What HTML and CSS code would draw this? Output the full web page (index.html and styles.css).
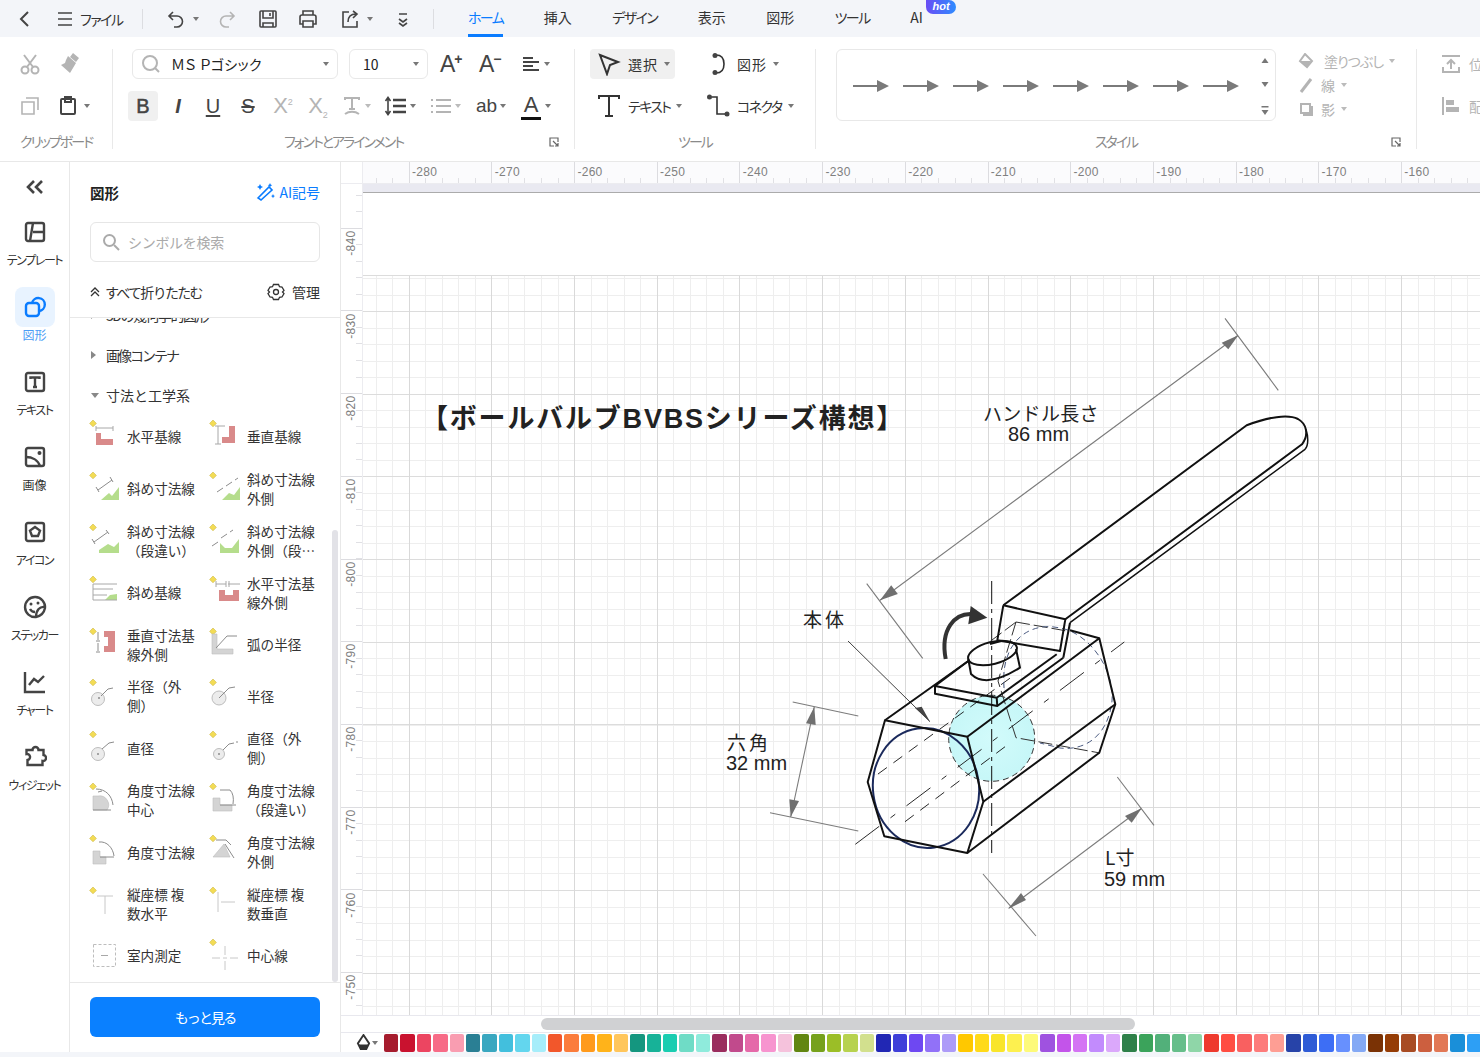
FILE: index.html
```html
<!DOCTYPE html>
<html lang="ja">
<head>
<meta charset="utf-8">
<title>図面エディタ</title>
<link rel="stylesheet" href="styles.css">
</head>
<body>
<svg class="defs" width="0" height="0" aria-hidden="true">
  <defs>
    <path id="dm" d="M5 1l3.400 3.400L5 7.800 1.600 4.400z" fill="#f3dc55" stroke="#cdb94a" stroke-width=".6"/>
    <radialGradient id="sphere" cx=".5" cy=".5" r=".6">
      <stop offset="0" stop-color="#d2fbfb"/>
      <stop offset="1" stop-color="#c4f6f7"/>
    </radialGradient>
  </defs>
</svg>
<div class="app">
  <header class="topbar">
    <svg class="ic18" viewBox="0 0 18 18"><path d="M12 2L5 9l7 7" class="ln"/></svg>
    <svg class="ic18 m22" viewBox="0 0 18 18"><path d="M2 3h14M2 9h14M2 15h14" class="ln thin"/></svg>
    <span class="file-label">ファイル</span>
    <i class="vsep m20"></i>
    <svg class="ic20 m23" viewBox="0 0 20 20"><path d="M7 3L3 7l4 4M3 7h8a5.500 5.500 0 0 1 0 11H8" class="ln thin"/></svg>
    <i class="caret m7"></i>
    <svg class="ic20 m18 off" viewBox="0 0 20 20"><path d="M13 3l4 4-4 4M17 7H9a5.500 5.500 0 0 0 0 11h3" class="ln thin"/></svg>
    <svg class="ic20 m21" viewBox="0 0 20 20"><path d="M3 2h14a1 1 0 0 1 1 1v14a1 1 0 0 1-1 1H3a1 1 0 0 1-1-1V3a1 1 0 0 1 1-1zM5 2v7h10V2M12 4v3M5 18v-4h10v4" class="ln thin"/></svg>
    <svg class="ic20 m20" viewBox="0 0 20 20"><path d="M5 6V2h10v4M5 15H2V8a2 2 0 0 1 2-2h12a2 2 0 0 1 2 2v7h-3M5 12h10v6H5z" class="ln thin"/></svg>
    <svg class="ic20 m22" viewBox="0 0 20 20"><path d="M9 3H3v15h14v-6M8 13c0-5 3-8 8-8M13 2l4 3-4 4" class="ln thin"/></svg>
    <i class="caret m7"></i>
    <svg class="ic16 m22" viewBox="0 0 16 16"><path d="M4 3h8M4 8l4 3 4-3M4 12l4 3 4-3" class="ln thin"/></svg>
    <i class="vsep m22"></i>
    <nav class="tabs">
      <a class="tab tab-on kana">ホーム</a>
      <a class="tab">挿入</a>
      <a class="tab kana">デザイン</a>
      <a class="tab">表示</a>
      <a class="tab">図形</a>
      <a class="tab kana">ツール</a>
      <a class="tab tab-ai">AI<b class="hot">hot</b></a>
    </nav>
  </header>

  <section class="ribbon">
    <div class="rg rg-clip">
      <div class="rrow pad-clip">
        <svg class="ic22 off" viewBox="0 0 22 22"><circle cx="6" cy="17" r="3.500" class="ln"/><circle cx="16" cy="17" r="3.500" class="ln"/><path d="M5 2l9 12M17 2L8 14" class="ln"/></svg>
        <svg class="ic22 off m17" viewBox="0 0 22 22"><path d="M15 0l6 5-3 4-6-5zM10 3l8 7-6 10-9-8 4-2 1-3z" fill="currentColor"/></svg>
      </div>
      <div class="rrow pad-clip">
        <svg class="ic22 off" viewBox="0 0 22 22"><path d="M3 7h12v12H3zM7 3h12v12" class="ln thin"/></svg>
        <svg class="ic22 m16" viewBox="0 0 22 22"><path d="M5 4h12a1 1 0 0 1 1 1v13a1 1 0 0 1-1 1H5a1 1 0 0 1-1-1V5a1 1 0 0 1 1-1zM8 2h6v5H8z" class="ln"/></svg>
        <i class="caret m5"></i>
      </div>
      <div class="rlabel">クリップボード</div>
    </div>

    <div class="rg rg-font">
      <div class="rrow pad-font">
        <div class="field font-field">
          <svg class="ic20 off" viewBox="0 0 20 20"><circle cx="9" cy="9" r="7" class="ln"/><path d="M14 14l4 4" class="ln"/></svg>
          <span class="field-text">ＭＳ Ｐゴシック</span>
          <i class="caret"></i>
        </div>
        <div class="field size-field">
          <span class="field-text">10</span>
          <i class="caret"></i>
        </div>
        <span class="a-grow m12">A<sup>+</sup></span>
        <span class="a-grow m15">A<sup>−</sup></span>
        <svg class="ic18 m19" viewBox="0 0 18 18"><path d="M1 3h10M1 7h16M1 11h10M1 15h16" class="ln"/></svg>
        <i class="caret m4"></i>
      </div>
      <div class="rrow pad-font2">
        <span class="fb fb-on">B</span>
        <span class="fb fi">I</span>
        <span class="fb fu">U</span>
        <span class="fb fs">S</span>
        <span class="fb fx">X<sup>2</sup></span>
        <span class="fb fx fx-last">X<sub>2</sub></span>
        <svg class="ic20 m9 off" viewBox="0 0 20 20"><path d="M3 4V2h14v2M10 2v11M7 13h6M3 18c4-3 10-3 14 0" class="ln"/></svg>
        <i class="caret m3 off-caret"></i>
        <svg class="ic22 m13" viewBox="0 0 22 22"><path d="M9 5h13M9 11h13M9 17h13" class="ln thick"/><path d="M4 3v16M1.500 6L4 2.500 6.500 6M1.500 16L4 19.500 6.500 16" class="ln thin"/></svg>
        <i class="caret m4"></i>
        <svg class="ic22 m14 off" viewBox="0 0 22 22"><path d="M6 5h15M6 11h15M6 17h15M1 5h2M1 11h2M1 17h2" class="ln"/></svg>
        <i class="caret m3 off-caret"></i>
        <span class="ab m15">ab</span>
        <i class="caret m4"></i>
        <span class="color-a m15">A</span>
        <i class="caret m4"></i>
      </div>
      <div class="rlabel">フォントとアラインメント</div>
      <svg class="launch" viewBox="0 0 10 10"><path d="M9 5V1H1v8h4M4 4l5 5M9 6v3H6" class="launch-ln"/></svg>
    </div>

    <div class="rg rg-tool">
      <div class="rrow pad-tool">
        <div class="tool tool-on">
          <svg class="ic24" viewBox="0 0 24 24"><path d="M3 3l18 7-8 3-3 9z" class="ln"/></svg>
          <span class="kanji">選択</span><i class="caret m6"></i>
        </div>
        <div class="tool">
          <svg class="ic24" viewBox="0 0 24 24"><path d="M10 3c6 0 8 4 8 9s-2 9-8 9" class="ln thin"/><circle cx="9" cy="3.500" r="2.500" fill="#444"/><circle cx="9" cy="20.500" r="2.500" fill="#444"/></svg>
          <span class="kanji">図形</span><i class="caret m6"></i>
        </div>
      </div>
      <div class="rrow pad-tool">
        <div class="tool tool-wide">
          <svg class="ic24" viewBox="0 0 24 24"><path d="M2 5V2h20v3M12 2v19M8 22h8" class="ln"/></svg>
          <span class="kana">テキスト</span><i class="caret m6"></i>
        </div>
        <div class="tool">
          <svg class="ic24" viewBox="0 0 24 24"><path d="M6 3h5v17h8" class="ln thin"/><circle cx="3.500" cy="3" r="2.500" fill="#444"/><circle cx="21" cy="20" r="2.500" fill="#444"/></svg>
          <span class="kana">コネクタ</span><i class="caret m6"></i>
        </div>
      </div>
      <div class="rlabel">ツール</div>
    </div>

    <div class="rg rg-style">
      <div class="style-row">
        <div class="style-box">
          <svg class="arrow" viewBox="0 0 36 12"><path d="M0 5h24v-5l12 6-12 6V7H0z"/></svg>
          <svg class="arrow" viewBox="0 0 36 12"><path d="M0 5h24v-5l12 6-12 6V7H0z"/></svg>
          <svg class="arrow" viewBox="0 0 36 12"><path d="M0 5h24v-5l12 6-12 6V7H0z"/></svg>
          <svg class="arrow" viewBox="0 0 36 12"><path d="M0 5h24v-5l12 6-12 6V7H0z"/></svg>
          <svg class="arrow" viewBox="0 0 36 12"><path d="M0 5h24v-5l12 6-12 6V7H0z"/></svg>
          <svg class="arrow" viewBox="0 0 36 12"><path d="M0 5h24v-5l12 6-12 6V7H0z"/></svg>
          <svg class="arrow" viewBox="0 0 36 12"><path d="M0 5h24v-5l12 6-12 6V7H0z"/></svg>
          <svg class="arrow" viewBox="0 0 36 12"><path d="M0 5h24v-5l12 6-12 6V7H0z"/></svg>
          <div class="style-scroll">
            <svg viewBox="0 0 8 5"><path d="M4 0l3.500 5h-7z"/></svg>
            <svg viewBox="0 0 8 5"><path d="M4 5L.5 0h7z"/></svg>
            <svg class="tall" viewBox="0 0 8 9"><path d="M.5 0h7v1.500h-7zM4 9L.5 4h7z"/></svg>
          </div>
        </div>
        <div class="style-opts">
          <div class="opt"><svg class="ic16" viewBox="0 0 16 16"><path d="M7 1l7 7-5 6-7-6z" fill="none" stroke="currentColor" stroke-width="2"/><path d="M2 8h11l-4 6z" fill="currentColor"/></svg><span class="opt-long">塗りつぶし</span><i class="caret off-caret"></i></div>
          <div class="opt"><svg class="ic16" viewBox="0 0 16 16"><path d="M3 15L13 2" stroke="currentColor" stroke-width="3" fill="none"/></svg><span>線</span><i class="caret off-caret"></i></div>
          <div class="opt"><svg class="ic16" viewBox="0 0 16 16"><path d="M3 3h9v9H3z" fill="none" stroke="currentColor" stroke-width="2"/><path d="M5 14h9V5" fill="none" stroke="currentColor" stroke-width="2"/></svg><span>影</span><i class="caret off-caret"></i></div>
        </div>
      </div>
      <div class="rlabel">スタイル</div>
      <svg class="launch" viewBox="0 0 10 10"><path d="M9 5V1H1v8h4M4 4l5 5M9 6v3H6" class="launch-ln"/></svg>
    </div>

    <div class="rg-last">
      <div class="rrow last-row">
        <svg class="ic20 off" viewBox="0 0 20 20"><path d="M1 2h18M10 15V6M6 10l4-4 4 4M2 13v5h16v-5" class="ln"/></svg>
        <span>位</span>
      </div>
      <div class="rrow last-row">
        <svg class="ic20 off" viewBox="0 0 20 20"><path d="M2 1v18" class="ln"/><path d="M5 4h8v5H5zM5 11h13v5H5z" fill="currentColor"/></svg>
        <span>配</span>
      </div>
    </div>
  </section>

  <main class="main">
    <aside class="sidenav">
      <svg class="collapse" viewBox="0 0 18 14"><path d="M8 1L2 7l6 6M16 1l-6 6 6 6" class="ln thick"/></svg>
      <a class="nav-item">
        <span class="nav-ic"><svg class="ic24" viewBox="0 0 24 24"><rect x="3" y="3" width="18" height="18" rx="2" class="ln"/><path d="M10 3L7 21M10 12h11" class="ln"/></svg></span>
        <span class="nav-label">テンプレート</span>
      </a>
      <a class="nav-item nav-on">
        <span class="nav-ic"><svg class="ic24" viewBox="0 0 24 24"><rect x="3" y="8" width="13" height="13" rx="3" class="ln"/><path d="M9 8a6.500 6.500 0 1 1 7 8" class="ln"/></svg></span>
        <span class="nav-label nav-kanji">図形</span>
      </a>
      <a class="nav-item">
        <span class="nav-ic"><svg class="ic24" viewBox="0 0 24 24"><rect x="3" y="3" width="18" height="18" rx="2" class="ln"/><path d="M7.500 9V7.500h9V9M12 7.500V17M10 17h4" class="ln"/></svg></span>
        <span class="nav-label">テキスト</span>
      </a>
      <a class="nav-item">
        <span class="nav-ic"><svg class="ic24" viewBox="0 0 24 24"><rect x="3" y="3" width="18" height="18" rx="2" class="ln"/><path d="M3 12c6 0 12 3 14 9" class="ln"/><circle cx="16.500" cy="8" r="2" fill="#444"/></svg></span>
        <span class="nav-label nav-kanji">画像</span>
      </a>
      <a class="nav-item">
        <span class="nav-ic"><svg class="ic24" viewBox="0 0 24 24"><rect x="3" y="3" width="18" height="18" rx="2" class="ln"/><path d="M12 7l5 3.600-2 5.400H9l-2-5.400z" class="ln"/></svg></span>
        <span class="nav-label">アイコン</span>
      </a>
      <a class="nav-item">
        <span class="nav-ic"><svg class="ic24" viewBox="0 0 24 24"><path d="M22 13a10 10 0 1 0-9 9c5-1 8-4 9-9z" class="ln"/><path d="M22 12c-5-1-9 3-9 10M7 14c1 2 3 3 5 3" class="ln thin"/><circle cx="8" cy="9" r="1.500" fill="#444"/><circle cx="15" cy="8" r="1.500" fill="#444"/></svg></span>
        <span class="nav-label">ステッカー</span>
      </a>
      <a class="nav-item">
        <span class="nav-ic"><svg class="ic24" viewBox="0 0 24 24"><path d="M2 2v20h20M6 15l5-6 4 3 6-6" class="ln"/></svg></span>
        <span class="nav-label">チャート</span>
      </a>
      <a class="nav-item">
        <span class="nav-ic"><svg class="ic24" viewBox="0 0 24 24"><path d="M10 6a3 3 0 1 1 6 0h5v5a3 3 0 1 1-1 6v4H5v-5a3 3 0 1 0-1-6V6z" class="ln" transform="translate(-.5 -1)"/></svg></span>
        <span class="nav-label">ウィジェット</span>
      </a>
    </aside>

    <aside class="panel">
      <div class="panel-head">
        <div class="panel-title">
          <strong>図形</strong>
          <a class="ai-link">
            <svg class="ic20" viewBox="0 0 20 20"><path d="M3 18L14 7l3 3L6 20z" class="ln thin" transform="translate(0 -2)"/><path d="M5 2l1 2 2 1-2 1-1 2-1-2-2-1 2-1zM15 1l.7 1.500 1.500.7-1.500.7L15 5.500l-.7-1.600-1.500-.7 1.500-.7zM18 12l.7 1.500 1.300.6-1.300.7-.7 1.400-.7-1.400-1.300-.7 1.300-.6z" fill="currentColor"/></svg>
            AI記号
          </a>
        </div>
        <div class="search">
          <svg class="ic18" viewBox="0 0 18 18"><circle cx="7.500" cy="7.500" r="5.500" class="ln"/><path d="M12 12l5 5" class="ln"/></svg>
          <span>シンボルを検索</span>
        </div>
        <div class="panel-tools">
          <span class="fold"><svg class="ic10" viewBox="0 0 10 10"><path d="M1 5l4-4 4 4M1 9l4-4 4 4" class="ln thin1"/></svg><span class="fold-text">すべて折りたたむ</span></span>
          <span class="manage"><svg class="ic18" viewBox="0 0 18 18"><path d="M6.500 1.500h5l1 2.200 2.500.3 2 3.500-1.500 1.500 1.500 1.500-2 3.500-2.500.3-1 2.200h-5l-1-2.200-2.500-.3-2-3.500L2.500 9 1 7.500l2-3.500 2.500-.3z" class="ln thin1"/><circle cx="9" cy="9" r="2.500" class="ln thin1"/></svg>管理</span>
        </div>
      </div>
      <div class="list">
        <div class="sect sect-clip"><i class="tri-r"></i>3Dの幾何学的図形</div>
        <div class="sect"><i class="tri-r"></i><span class="sect-kana">画像コンテナ</span></div>
        <div class="sect"><i class="tri-d"></i>寸法と工学系</div>
        <div class="shapes">
          <div class="shape"><svg class="si" viewBox="0 0 36 36"><use href="#dm"/><path d="M8 14h5v6h12v6H8z" class="red"/><path d="M8 7v5M25 7v5M8 9h17" class="gl"/></svg><span class="sl">水平基線</span></div>
          <div class="shape"><svg class="si" viewBox="0 0 36 36"><use href="#dm"/><path d="M21 7h6v17H14v-6h7z" class="red"/><path d="M10 7v18M7 7h10M7 25h6" class="gl"/></svg><span class="sl">垂直基線</span></div>
          <div class="shape"><svg class="si" viewBox="0 0 36 36"><use href="#dm"/><path d="M13 29l8-7 3 3 7-9v13z" class="grn"/><path d="M10 19l14-10M8 16l3 5M22 6l3 5" class="gl dk"/></svg><span class="sl">斜め寸法線</span></div>
          <div class="shape"><svg class="si" viewBox="0 0 36 36"><use href="#dm"/><path d="M14 29l7-7 5 2 6-8v13z" class="grn"/><path d="M9 21l6-4M18 15l6-4M27 9l3-2" class="gl dk"/></svg><span class="sl">斜め寸法線外側</span></div>
          <div class="shape"><svg class="si" viewBox="0 0 36 36"><use href="#dm"/><path d="M11 30v-3l9-6 6 3 5-5v11z" class="grn"/><path d="M6 19l14-10M4 16l3 5M18 7l3 4" class="gl dk"/></svg><span class="sl">斜め寸法線（段違い）</span></div>
          <div class="shape"><svg class="si" viewBox="0 0 36 36"><use href="#dm"/><path d="M12 30v-10l5 5 7 0 7-9v14z" class="grn"/><path d="M4 23l6-4M13 15l6-4M22 9l3-2" class="gl dk"/></svg><span class="sl clamp">斜め寸法線外側（段違い）</span></div>
          <div class="shape"><svg class="si" viewBox="0 0 36 36"><use href="#dm"/><path d="M17 25l5-5 7-1v6z" class="grn"/><path d="M5 9h24M5 9v16h24M5 14h20M5 20h14" class="gl"/></svg><span class="sl">斜め基線</span></div>
          <div class="shape"><svg class="si" viewBox="0 0 36 36"><use href="#dm"/><path d="M11 15h6v5h8v-5h6v11H11z" class="red"/><path d="M8 9h10M20 9h12M8 6v6M18 6v6M21 6v6" class="gl"/></svg><span class="sl">水平寸法基線外側</span></div>
          <div class="shape"><svg class="si" viewBox="0 0 36 36"><use href="#dm"/><path d="M16 4h11v21H16v-6h4v-9h-4z" class="red"/><path d="M10 5v8M10 16v8M8 14h4M8 25h4" class="gl dk"/></svg><span class="sl">垂直寸法基線外側</span></div>
          <div class="shape"><svg class="si" viewBox="0 0 36 36"><use href="#dm"/><path d="M4 7h5v15h16v5H4z" class="gry"/><path d="M8 21L19 9h10" class="gl dk"/></svg><span class="sl">弧の半径</span></div>
          <div class="shape"><svg class="si" viewBox="0 0 36 36"><use href="#dm"/><circle cx="10" cy="21" r="6.500" class="cir"/><path d="M10 20h2M11 19v2M13 18l7-7 5-1" class="gl dk"/></svg><span class="sl">半径（外側）</span></div>
          <div class="shape"><svg class="si" viewBox="0 0 36 36"><use href="#dm"/><circle cx="11" cy="20" r="7" class="cir"/><path d="M11 20l10-10 6-1" class="gl dk"/></svg><span class="sl">半径</span></div>
          <div class="shape"><svg class="si" viewBox="0 0 36 36"><use href="#dm"/><circle cx="10" cy="24" r="6.500" class="cir"/><path d="M9 24h2M10 23v2M14 19l7-6 5-1" class="gl dk"/></svg><span class="sl">直径</span></div>
          <div class="shape"><svg class="si" viewBox="0 0 36 36"><use href="#dm"/><circle cx="11" cy="24" r="5.500" class="cir"/><path d="M10 24h2M11 23v2M15 20l6-6 5-1M28 12h2" class="gl dk"/></svg><span class="sl">直径（外側）</span></div>
          <div class="shape"><svg class="si" viewBox="0 0 36 36"><use href="#dm"/><path d="M5 14h5a9 9 0 0 1 9 14H5z" class="gry"/><path d="M8 7c10 0 16 7 17 16M5 28h18M10 10l4-1" class="gl dk"/></svg><span class="sl">角度寸法線中心</span></div>
          <div class="shape"><svg class="si" viewBox="0 0 36 36"><use href="#dm"/><path d="M5 16h7v7h12v6H5z" class="gry"/><path d="M12 8h10c3 3 4 8 3 14M12 23h16" class="gl dk"/></svg><span class="sl">角度寸法線（段違い）</span></div>
          <div class="shape"><svg class="si" viewBox="0 0 36 36"><use href="#dm"/><path d="M5 17h7v6h6v7H5z" class="gry"/><path d="M11 8c8-1 14 6 15 14M12 23h14" class="gl dk"/></svg><span class="sl">角度寸法線</span></div>
          <div class="shape"><svg class="si" viewBox="0 0 36 36"><use href="#dm"/><path d="M5 23l11-13 6 13z" class="gry"/><path d="M8 6h10l5 5M17 10l9 14" class="gl dk"/></svg><span class="sl">角度寸法線外側</span></div>
          <div class="shape"><svg class="si" viewBox="0 0 36 36"><use href="#dm"/><path d="M9 10h16M17 10v18" class="gl lt"/></svg><span class="sl">縦座標 複<br>数水平</span></div>
          <div class="shape"><svg class="si" viewBox="0 0 36 36"><use href="#dm"/><path d="M10 6v20M13 16h14" class="gl lt"/></svg><span class="sl">縦座標 複<br>数垂直</span></div>
          <div class="shape"><svg class="si" viewBox="0 0 36 36"><path d="M5.500 6.500h22v22h-22z" class="dash"/><path d="M13 17.500h7" class="gl"/></svg><span class="sl">室内測定</span></div>
          <div class="shape"><svg class="si" viewBox="0 0 36 36"><use href="#dm"/><path d="M4 20h8M15 20h4M22 20h8M17 8v9M17 23v9" class="gl lt"/></svg><span class="sl">中心線</span></div>
        </div>
        <i class="list-thumb"></i>
      </div>
      <div class="panel-foot"><button class="more">もっと見る</button></div>
    </aside>

    <section class="work">
      <div class="ruler-corner"></div>
      <div class="ruler-top">
        <span>-280</span><span>-270</span><span>-260</span><span>-250</span><span>-240</span><span>-230</span><span>-220</span><span>-210</span><span>-200</span><span>-190</span><span>-180</span><span>-170</span><span>-160</span>
      </div>
      <div class="ruler-left">
        <span>-840</span><span>-830</span><span>-820</span><span>-810</span><span>-800</span><span>-790</span><span>-780</span><span>-770</span><span>-760</span><span>-750</span>
      </div>
      <div class="canvas">
        <div class="page-band"></div>
        <div class="page-head"></div>
        <div class="page-grid"></div>
        <svg class="diagram" viewBox="363 183 1117 831">
          <circle cx="991.700" cy="737.300" r="43" fill="url(#sphere)" class="d-sphere"/>

          <g class="d-dim">
            <path d="M1225 317.300L1278.300 389.300M866.700 582.700L922.700 657.300M880 599.300L1238.300 334.300"/>
            <path d="M792.700 701L858.300 715M770 811.700L858.300 830M814.300 705.700L790.700 816"/>
            <path d="M1117.300 776L1154 824.300M983 873L1036 935M1141.700 807.300L1009 907"/>
          </g>
          <g class="d-head">
            <path d="M1238.300 334.300L1221.700 341.700 1228.300 348.300z"/>
            <path d="M880 599.300L897.800 593 891.200 584.200z"/>
            <path d="M814.300 705.700L806 722.300 815.700 724z"/>
            <path d="M790.700 816L789.300 798.300 799 800z"/>
            <path d="M1141.700 807.300L1125 815 1131.700 821.700z"/>
            <path d="M1008 908L1021 892 1026 899z"/>
          </g>
          <path class="d-thin" d="M848 640L930 720.700"/>
          <path class="d-headk" d="M930 720.700L915 707 921.700 705.700z"/>

          <path class="d-center" d="M855.300 843.300L1124.300 641"/>
          <path class="d-vert" d="M991.700 580V852"/>
          <path class="d-bore" d="M878 773L1013 675M905 820.700L1010 742"/>
          <path class="d-hidden" d="M1016 621L998 680 1016 736.700 1100 752M1016 621L1067 630M1016 621L988 642"/>
          <path class="d-navy" d="M1004 687C1000 640 1030 620 1060 627C1090 632 1115 670 1112 700C1108 735 1085 750 1060 747L1040 742"/>

          <ellipse class="d-ring" cx="926" cy="787" rx="53" ry="60" transform="rotate(-8 926 787)"/>

          <g class="d-body">
            <path d="M885 719.300L967.300 735.700L983.300 800.700L967.300 852L884.300 835.300L867.700 781Z"/>
            <path d="M885 719.300L968.300 660M990 643L1001 640"/>
            <path d="M967.300 735.700L1099.300 637.300L1115.300 703.300L1099.300 751.700L967.300 852"/>
            <path d="M983.300 800.700L1115.300 703.300M1070 629.300L1099.300 637.300"/>
          </g>
          <g class="d-body">
            <path d="M935 685L996.700 696.700L1056.700 653.300M935 685L935 692.700L997.300 705L1063.300 656.700M996.700 696.700L997.300 705M935 685L968.300 660"/>
            <path d="M1003.300 604.300L997.300 639.300L1060 650L1065.300 618.300L1003.300 604.300M1063.300 656.700L1070 621.700"/>
            <path d="M1003.300 604.300L1246.700 424.300C1268 416 1288 413 1298 418C1307 423 1309 434 1302 443.300L1065.300 618.300"/>
            <path class="d-body-fine" d="M1070 621.700L1305 448.300C1309 444 1308 434 1306 429"/>
            <ellipse cx="992.500" cy="652" rx="25" ry="11" transform="rotate(-14 992.500 652)"/>
            <path d="M968.300 658L971 673Q986 688 1020 666.700L1016 648"/>
          </g>

          <path class="d-turn" d="M945.700 658C940 628 955 612 972 613"/>
          <path class="d-turnh" d="M970.700 605L987.300 616.700 968.300 623.300z"/>

          <text class="d-title" x="421" y="427">【ボールバルブBVBSシリーズ構想】</text>
          <text class="d-t" x="983" y="420">ハンドル長さ</text>
          <text class="d-n" x="1008" y="440">86 mm</text>
          <text class="d-t wide" x="803" y="626">本体</text>
          <text class="d-t wide" x="727" y="749">六角</text>
          <text class="d-n" x="726" y="769">32 mm</text>
          <text class="d-t" x="1105" y="864">L寸</text>
          <text class="d-n" x="1104" y="885">59 mm</text>
        </svg>
      </div>
      <div class="hscroll"><i class="hthumb"></i></div>
      <div class="palette">
        <svg class="fill-ic" viewBox="0 0 16 18"><path d="M8 1l6 9-3 6H5l-3-6z" fill="none" stroke="#333" stroke-width="2"/><path d="M3 11h10l-2 5H5z" fill="#333"/></svg>
        <i class="caret pal-caret"></i>
        <div class="swatches">
          <i style="background:#a61c2e"></i><i style="background:#c9122f"></i><i style="background:#ec4561"></i><i style="background:#f76b87"></i><i style="background:#f99db1"></i>
          <i style="background:#2a7f94"></i><i style="background:#39a7c0"></i><i style="background:#42bfdd"></i><i style="background:#63d6ee"></i><i style="background:#a6edfa"></i>
          <i style="background:#f2572b"></i><i style="background:#fb7c3c"></i><i style="background:#ff9a1c"></i><i style="background:#ffb31a"></i><i style="background:#ffc65c"></i>
          <i style="background:#14967f"></i><i style="background:#17b298"></i><i style="background:#1acdb1"></i><i style="background:#6fdcc6"></i><i style="background:#8febdc"></i>
          <i style="background:#9a2c5e"></i><i style="background:#c14a8c"></i><i style="background:#e569a9"></i><i style="background:#f794cf"></i><i style="background:#f5c2dc"></i>
          <i style="background:#618611"></i><i style="background:#76a11c"></i><i style="background:#9bbe27"></i><i style="background:#b7d24f"></i><i style="background:#d2e08e"></i>
          <i style="background:#2127b4"></i><i style="background:#3f3fd9"></i><i style="background:#6e48f2"></i><i style="background:#9171f8"></i><i style="background:#ad9bf8"></i>
          <i style="background:#ffc800"></i><i style="background:#ffda1a"></i><i style="background:#f9e52b"></i><i style="background:#fdf04f"></i><i style="background:#fdfa7a"></i>
          <i style="background:#9f52e0"></i><i style="background:#c354ea"></i><i style="background:#d474f4"></i><i style="background:#c28bfd"></i><i style="background:#dba8fb"></i>
          <i style="background:#2e8049"></i><i style="background:#3ba35b"></i><i style="background:#52b07a"></i><i style="background:#66be8a"></i><i style="background:#8fd6a8"></i>
          <i style="background:#ee3a2e"></i><i style="background:#ff4d42"></i><i style="background:#f96060"></i><i style="background:#fd7b7b"></i><i style="background:#fe9e94"></i>
          <i style="background:#2743a8"></i><i style="background:#2e5bd6"></i><i style="background:#3d6ef5"></i><i style="background:#6790fe"></i><i style="background:#84a9f5"></i>
          <i style="background:#7a3205"></i><i style="background:#953c05"></i><i style="background:#a84b23"></i><i style="background:#cc5f3f"></i><i style="background:#e27856"></i>
          <i style="background:#1a8fd9"></i><i style="background:#2d9ff5"></i>
        </div>
      </div>
    </section>
  </main>
  <div class="statusbar"></div>
</div>
</body>
</html>
```
FILE: styles.css
```css
* { box-sizing: border-box; }
html, body { margin: 0; height: 100%; }
body {
  overflow: hidden;
  background: #fff;
  color: #333;
  font-family: "Noto Sans CJK JP", "Noto Sans", sans-serif;
  font-size: 14px;
  font-feature-settings: "palt";
}
i { display: block; font-style: normal; }
a { display: block; }
sup, sub { line-height: 0; }
.defs { position: absolute; }
.app { display: flex; flex-direction: column; height: 1057px; }

/* generic icons */
svg { display: block; flex: none; }
.ic10 { width: 10px; height: 10px; }
.ic16 { width: 16px; height: 16px; }
.ic18 { width: 18px; height: 18px; }
.ic20 { width: 20px; height: 20px; }
.ic22 { width: 22px; height: 22px; }
.ic24 { width: 24px; height: 24px; }
.ln { fill: none; stroke: currentColor; stroke-width: 2; }
.ln.thin { stroke-width: 1.6; }
.ln.thin1 { stroke-width: 1.300; }
.ln.thick { stroke-width: 2.600; }
.off { color: #b4b4b4; }
.caret { width: 0; height: 0; flex: none; border-left: 3px solid transparent; border-right: 3px solid transparent; border-top: 4px solid #777; }
.off-caret { border-top-color: #bbb; }
.kana { letter-spacing: -1.6px; }
.kanji { letter-spacing: 1px; }
.m3 { margin-left: 3px; } .m4 { margin-left: 4px; } .m5 { margin-left: 5px; } .m6 { margin-left: 6px; }
.m7 { margin-left: 7px; } .m9 { margin-left: 9px; } .m12 { margin-left: 12px; } .m13 { margin-left: 13px; }
.m14 { margin-left: 14px; } .m15 { margin-left: 15px; } .m16 { margin-left: 16px; } .m17 { margin-left: 17px; }
.m18 { margin-left: 18px; } .m19 { margin-left: 19px; } .m20 { margin-left: 20px; } .m21 { margin-left: 21px; }
.m22 { margin-left: 22px; } .m23 { margin-left: 23px; }

/* top bar */
.topbar { height: 37px; flex: none; display: flex; align-items: center; padding-left: 16px; background: #f3f5f9; color: #444; }
.file-label { margin-left: 6px; width: 42px; white-space: nowrap; color: #333; letter-spacing: -1.500px; }
.vsep { width: 1px; height: 20px; background: #dcdde1; }
.tabs { display: flex; gap: 40.500px; margin-left: 34px; height: 37px; }
.tab { position: relative; height: 37px; line-height: 34px; color: #333; white-space: nowrap; }
.tab-on { color: #0a7cff; border-bottom: 3px solid #0a7cff; }
.hot { position: absolute; left: 16px; top: 0; width: 30px; height: 14px; border-radius: 0 8px 8px 8px; background: linear-gradient(90deg, #6a4df5, #2e8cff); color: #fff; font: italic 700 11px/13px "Liberation Sans", sans-serif; letter-spacing: 0; text-align: center; }

/* ribbon */
.ribbon { height: 125px; flex: none; display: flex; background: #fff; border-bottom: 1px solid #e8e8e8; color: #444; }
.rg { position: relative; height: 100px; margin-top: 12px; border-right: 1px solid #e9e9e9; flex: none; }
.rg-clip { width: 113px; }
.rg-font { width: 462px; }
.rg-tool { width: 241px; }
.rg-style { width: 601px; }
.rg-last { flex: 1; margin-top: 12px; overflow: hidden; }
.rrow { display: flex; align-items: center; height: 30px; margin-bottom: 12px; }
.rlabel { height: 20px; line-height: 20px; margin-top: -2px; text-align: center; color: #8a8a8a; white-space: nowrap; letter-spacing: -2px; }
.launch { position: absolute; bottom: 2px; right: 15px; width: 10px; height: 10px; }
.launch-ln { fill: none; stroke: #666; stroke-width: 1.200; }
.pad-clip { padding-left: 19px; }
.pad-font { padding-left: 19px; }
.pad-font2 { padding-left: 15px; }
.field { height: 30px; display: flex; align-items: center; border: 1px solid #e8e8e8; border-radius: 6px; padding: 0 8px; }
.font-field { width: 206px; }
.size-field { width: 79px; margin-left: 11px; padding-left: 13px; }
.field-text { flex: 1; color: #222; white-space: nowrap; }
.font-field .field-text { margin-left: 10px; letter-spacing: .4px; }
.a-grow { width: 24px; font: 400 23px/30px "Liberation Sans", sans-serif; color: #444; white-space: nowrap; }
.a-grow sup { font-size: 14px; font-weight: 700; vertical-align: 8px; margin-left: -1px; }
.fb { width: 30px; height: 30px; margin-right: 5px; flex: none; border-radius: 4px; text-align: center; font: 400 20px/30px "Liberation Sans", sans-serif; color: #444; }
.fb-on { background: #f0f0f0; font-weight: 400; -webkit-text-stroke: .5px #444; }
.fi { font-style: italic; font-weight: 700; }
.fu { text-decoration: underline; text-underline-offset: 2px; }
.fs { text-decoration: line-through; }
.fb.fx { font-size: 22px; white-space: nowrap; color: #b4b4b4; }
.fx sup, .fx sub { font-size: 9px; }
.fb.fx-last { margin-right: 0; }
.ab { font: 400 19px/30px "Liberation Sans", sans-serif; width: 20px; color: #444; }
.color-a { width: 20px; font: 400 22px/24px "Liberation Sans", sans-serif; text-align: center; color: #444; border-bottom: 3px solid #111; }
.rg-tool .rrow { display: grid; align-items: center; grid-template-columns: 109px auto; padding-left: 15px; }
.tool { height: 30px; display: flex; align-items: center; gap: 7px; padding-left: 7px; color: #333; border-radius: 4px; white-space: nowrap; }
.tool .caret { margin-left: -1px; }
.tool-on { width: 85px; background: #f0f0f0; }
.style-row { display: flex; height: 72px; margin-bottom: 12px; }
.style-box { position: relative; width: 440px; height: 72px; margin-left: 20px; display: flex; align-items: center; gap: 14px; padding-left: 16px; border: 1px solid #e8e8e8; border-radius: 6px; }
.arrow { width: 36px; height: 12px; fill: #7a7a7a; margin-top: 2px; }
.style-scroll { position: absolute; right: 6px; top: 8px; bottom: 5px; display: flex; flex-direction: column; justify-content: space-between; align-items: center; }
.style-scroll svg { width: 8px; height: 5px; fill: #777; }
.style-scroll svg.tall { height: 9px; }
.style-opts { margin-left: 22px; color: #b4b4b4; }
.opt { display: flex; align-items: center; height: 24px; white-space: nowrap; }
.opt span { margin: 0 6px 0 7px; }
.opt .opt-long { margin-left: 10px; letter-spacing: -1px; }
.last-row { padding-left: 24px; gap: 8px; color: #b4b4b4; white-space: nowrap; }

/* main */
.main { flex: 1; min-height: 0; display: flex; }
.statusbar { height: 5px; flex: none; background: #f3f5f9; }

/* side nav */
.sidenav { width: 70px; flex: none; border-right: 1px solid #e8e8e8; display: flex; flex-direction: column; align-items: center; padding-top: 18px; color: #444; }
.collapse { width: 18px; height: 14px; margin: 0 0 18px; }
.nav-item { width: 69px; height: 75px; display: flex; flex-direction: column; align-items: center; flex: none; }
.nav-ic { width: 40px; height: 40px; display: flex; align-items: center; justify-content: center; border-radius: 8px; }
.nav-ic .ln { stroke-width: 2.400; }
.nav-label { font-size: 12px; line-height: 16px; white-space: nowrap; color: #333; letter-spacing: -1.400px; }
.nav-label.nav-kanji { letter-spacing: 0; }
.nav-on .nav-ic { background: #e8f3ff; color: #0a7cff; }
.nav-on .nav-label { color: #4b9cf5; }

/* shape panel */
.panel { width: 271px; flex: none; display: flex; flex-direction: column; border-right: 1px solid #e8e8e8; font-feature-settings: normal; }
.panel-head { height: 156px; flex: none; padding: 20px 20px 0; border-bottom: 1px solid #e8e8e8; }
.panel-title { display: flex; justify-content: space-between; align-items: center; height: 20px; font-size: 14.500px; }
.panel-title strong { color: #222; font-weight: 700; }
.ai-link { display: flex; align-items: center; gap: 4px; color: #0a7cff; font-size: 14px; }
.search { height: 40px; margin-top: 20px; display: flex; align-items: center; gap: 8px; padding-left: 11px; border: 1px solid #e6e6e6; border-radius: 6px; color: #aaa; font-size: 14px; letter-spacing: -.300px; }
.panel-tools { height: 30px; margin-top: 15px; display: flex; justify-content: space-between; align-items: center; }
.fold, .manage { display: flex; align-items: center; color: #333; }
.fold { gap: 5px; }
.fold-text { letter-spacing: -1.700px; }
.manage { gap: 7px; }
.list { position: relative; flex: 1; min-height: 0; overflow: hidden; }
.sect { height: 40px; padding-left: 21px; display: flex; align-items: center; gap: 9px; color: #333; white-space: nowrap; }
.sect-clip { margin-top: -23px; letter-spacing: -1.500px; }
.sect-kana { letter-spacing: -2px; }
.tri-r { width: 0; height: 0; border-top: 4px solid transparent; border-bottom: 4px solid transparent; border-left: 5px solid #888; margin-right: 1px; }
.tri-d { width: 0; height: 0; border-left: 4px solid transparent; border-right: 4px solid transparent; border-top: 5px solid #888; margin-right: -2px; }
.shapes { display: grid; grid-template-columns: 120px 120px; grid-auto-rows: 51.900px; padding-left: 18px; margin-top: -4px; }
.shape { display: flex; align-items: center; gap: 3px; }
.si { width: 36px; height: 36px; }
.sl { width: 71px; line-height: 19px; font-size: 13.600px; color: #333; }
.clamp { display: -webkit-box; -webkit-line-clamp: 2; -webkit-box-orient: vertical; overflow: hidden; }
.red { fill: #d98a8a; }
.grn { fill: #b5dd8c; }
.gry { fill: #d4d4d4; stroke: #bdbdbd; stroke-width: .6; }
.gl { fill: none; stroke: #a8a8a8; stroke-width: 1; }
.gl.dk { stroke: #8c8c8c; }
.gl.lt { stroke: #c8c8c8; }
.cir { fill: #ececec; stroke: #bdbdbd; stroke-width: 1; }
.dash { fill: none; stroke: #bdbdbd; stroke-dasharray: 3 2; }
.list-thumb { position: absolute; left: 262px; top: 212px; bottom: 0; width: 6px; border-radius: 3px; background: #e2e2e7; }
.panel-foot { height: 70px; flex: none; padding: 14px 20px; border-top: 1px solid #e8e8e8; }
.more { display: block; width: 230px; height: 40px; border: 0; border-radius: 6px; background: #0a80ff; color: #fff; font: inherit; font-size: 14px; letter-spacing: -1.900px; }

/* workspace */
.work { flex: 1; min-width: 0; display: grid; grid-template-columns: 22px 1117px; grid-template-rows: 22px 831px 18px 19px; }
.ruler-corner { background: #fff; border-right: 1px solid #ececf0; border-bottom: 1px solid #ececf0; }
.ruler-top {
  display: flex; padding-left: 49px; overflow: hidden; color: #808080;
  font: 12px/20px "Liberation Sans", sans-serif; letter-spacing: .3px;
  background:
    repeating-linear-gradient(90deg, transparent 0 45.680px, #dcdce0 45.680px 46.680px, transparent 46.680px 82.700px) 0 0 / 100% 100% no-repeat,
    repeating-linear-gradient(90deg, transparent 0 12.600px, #e0e0e4 12.600px 13.600px, transparent 13.600px 16.540px) 0 100% / 100% 5px no-repeat,
    #fbfbfd;
  border-bottom: 1px solid #ececf0;
}
.ruler-top span { flex: none; width: 82.700px; }
.ruler-left {
  display: flex; flex-direction: column; padding-top: 44px; overflow: hidden; color: #808080;
  font: 12px/20px "Liberation Sans", sans-serif; letter-spacing: .3px;
  background:
    repeating-linear-gradient(180deg, transparent 0 43.800px, #dcdce0 43.800px 44.800px, transparent 44.800px 82.700px) 0 0 / 100% 100% no-repeat,
    repeating-linear-gradient(180deg, transparent 0 10.600px, #e0e0e4 10.600px 11.600px, transparent 11.600px 16.540px) 100% 0 / 6px 100% no-repeat,
    #fff;
  border-right: 1px solid #ececf0;
}
.ruler-left span { flex: none; height: 82.700px; width: 18px; writing-mode: vertical-rl; transform: rotate(180deg); text-align: end; padding-bottom: 2px; }
.canvas { position: relative; overflow: hidden; display: flex; flex-direction: column; background: #fff; }
.page-band { height: 9px; flex: none; background: #e9e9f1; border-bottom: 1px solid #ababab; }
.page-head { height: 83px; flex: none; background: #fff; border-bottom: 1px solid #dcdcdc; }
.page-grid {
  flex: 1;
  background:
    repeating-linear-gradient(90deg, transparent 0 45.680px, #d9d9d9 45.680px 46.680px, transparent 46.680px 82.700px),
    repeating-linear-gradient(180deg, transparent 0 35px, #dcdcdc 35px 36px, transparent 36px 82.700px),
    repeating-linear-gradient(90deg, transparent 0 12.600px, #eeeeee 12.600px 13.600px, transparent 13.600px 16.540px),
    repeating-linear-gradient(180deg, transparent 0 2px, #eeeeee 2px 3px, transparent 3px 16.540px);
}
.diagram { position: absolute; left: 0; top: 0; width: 1117px; height: 831px; }
.d-sphere { stroke: #333; stroke-width: 1; stroke-dasharray: 6 4; }
.d-dim { fill: none; stroke: #7c7c7c; stroke-width: 1.100; }
.d-head { fill: #707070; }
.d-thin { fill: none; stroke: #111; stroke-width: .8; }
.d-headk { fill: #444; }
.d-center { fill: none; stroke: #111; stroke-width: .9; stroke-dasharray: 30 14 6 14; }
.d-vert { fill: none; stroke: #111; stroke-width: 1; stroke-dasharray: 23 5 4 5; }
.d-bore { fill: none; stroke: #111; stroke-width: .9; stroke-dasharray: 11 8; }
.d-hidden { fill: none; stroke: #333; stroke-width: 1; stroke-dasharray: 14 4; }
.d-navy { fill: none; stroke: #4a5a80; stroke-width: 1; stroke-dasharray: 6 4; }
.d-ring { fill: none; stroke: #1b2a5c; stroke-width: 2; }
.d-body { fill: none; stroke: #111; stroke-width: 2; stroke-linejoin: round; }
.d-body-fine { stroke-width: 1.500; }
.d-turn { fill: none; stroke: #333; stroke-width: 4; }
.d-turnh { fill: #333; }
.d-title { font-family: "Liberation Sans", "Noto Sans CJK JP", sans-serif; font-size: 27px; font-weight: 700; fill: #222; letter-spacing: 1.800px; font-feature-settings: normal; }
.d-t { font-size: 19px; fill: #222; font-weight: 400; font-feature-settings: normal; letter-spacing: .3px; }
.d-t.wide { letter-spacing: 3px; }
.d-n { font: 20px "Liberation Sans", sans-serif; fill: #222; letter-spacing: 0; }
.hscroll { grid-column: 1 / 3; border-top: 1px solid #e8e8ee; border-bottom: 1px solid #e8e8ee; background: #fff; padding: 2px 0 0 200px; }
.hthumb { width: 594px; height: 12px; border-radius: 6px; background: #d0d1d3; }
.palette { grid-column: 1 / 3; display: flex; align-items: center; padding-left: 15px; background: #fff; overflow: hidden; }
.fill-ic { width: 15px; height: 17px; }
.pal-caret { margin-left: 1px; }
.swatches { display: flex; gap: 2px; margin-left: 6px; }
.swatches i { width: 14.420px; height: 18px; flex: none; border-radius: 2px; }
```
